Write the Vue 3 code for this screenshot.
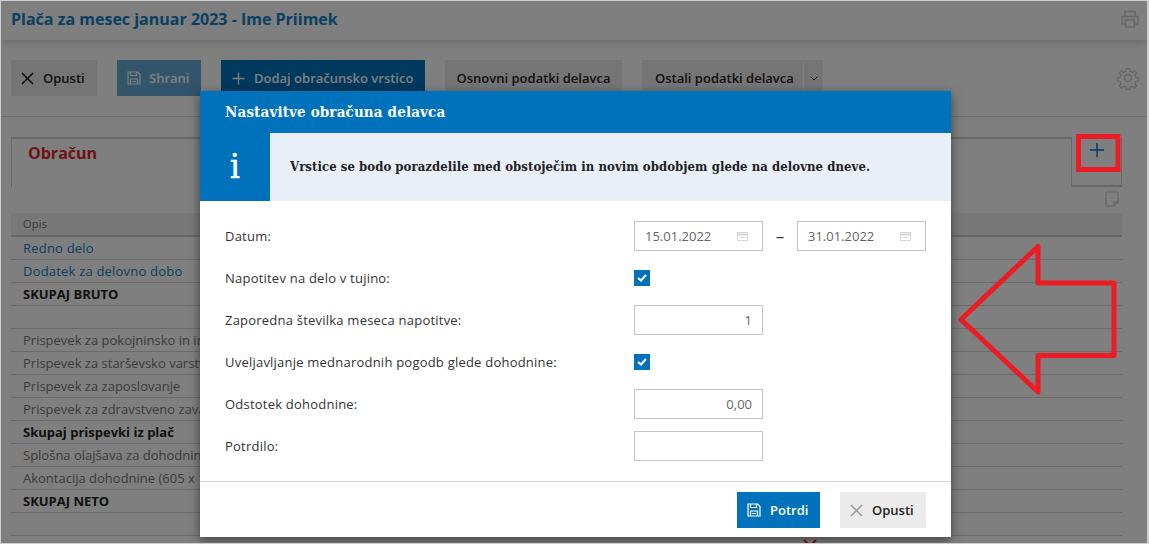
<script setup>
const rows = [
  { text: 'Redno delo', kind: 'link' },
  { text: 'Dodatek za delovno dobo', kind: 'link' },
  { text: 'SKUPAJ BRUTO', kind: 'bold' },
  { text: '\u00a0', kind: '' },
  { text: 'Prispevek za pokojninsko in invalidsko zavarovanje', kind: '' },
  { text: 'Prispevek za starševsko varstvo', kind: '' },
  { text: 'Prispevek za zaposlovanje', kind: '' },
  { text: 'Prispevek za zdravstveno zavarovanje', kind: '' },
  { text: 'Skupaj prispevki iz plač', kind: 'bold' },
  { text: 'Splošna olajšava za dohodnino', kind: '' },
  { text: 'Akontacija dohodnine (605 x 16%)', kind: '' },
  { text: 'SKUPAJ NETO', kind: 'bold' },
  { text: '\u00a0', kind: '' }
]
</script>

<template>
  <div class="stage">
    <header class="topbar">
      <h1 class="page-title">Plača za mesec januar 2023 - Ime Priimek</h1>
      <svg class="print-icon" width="20" height="20" viewBox="0 0 20 20" fill="none" stroke="currentColor" stroke-width="1.4">
        <path d="M5 7V2.5h10V7" />
        <path d="M5 15H2V7.5h16V15h-3" />
        <rect x="5.5" y="11" width="9" height="7" />
      </svg>
    </header>

    <div class="toolbar">
      <button class="btn btn-grey">
        <svg width="13" height="13" viewBox="0 0 13 13" fill="none" stroke="#111" stroke-width="1.5"><path d="M1 1l11 11M12 1L1 12" /></svg>
        <span>Opusti</span>
      </button>
      <button class="btn btn-blue btn-disabled">
        <svg width="14" height="14" viewBox="0 0 14 14" fill="none" stroke="currentColor" stroke-width="1.2"><path d="M1 1h9.5L13 3.5V13H1z" /><path d="M3.5 1v3.5h6V1M3.5 13V8h7v5M5 10.5h4" /></svg>
        <span>Shrani</span>
      </button>
      <button class="btn btn-blue btn-add">
        <svg width="13" height="13" viewBox="0 0 13 13" fill="none" stroke="currentColor" stroke-width="1.3"><path d="M6.5 0.5v12M0.5 6.5h12" /></svg>
        <span>Dodaj obračunsko vrstico</span>
      </button>
      <button class="btn btn-grey btn-plain btn-basic"><span>Osnovni podatki delavca</span></button>
      <div class="split">
        <button class="btn btn-grey btn-plain btn-other"><span>Ostali podatki delavca</span></button>
        <button class="btn btn-grey btn-caret">
          <svg width="8" height="5" viewBox="0 0 8 5" fill="none" stroke="#222" stroke-width="1"><path d="M0.5 0.5L4 4l3.5-3.5" /></svg>
        </button>
      </div>
      <svg class="gear-icon" width="24" height="24" viewBox="0 0 24 24" fill="none" stroke="currentColor" stroke-width="1.5">
        <circle cx="12" cy="12" r="3.6" />
        <path d="M10.3 1.5h3.4l.6 3 2.3 1 2.6-1.700 2.400 2.400-1.700 2.600 1 2.300 3 .6v3.400l-3 .6-1 2.300 1.700 2.600-2.400 2.400-2.600-1.700-2.300 1-.6 3h-3.400l-.6-3-2.300-1-2.600 1.700-2.400-2.400 1.700-2.600-1-2.300-3-.6v-3.400l3-.6 1-2.300-1.700-2.600 2.400-2.400 2.600 1.700 2.300-1z" transform="translate(1.200 1.200) scale(.9)" />
      </svg>
    </div>

    <main class="content">
      <div class="tabs">
        <div class="tab-main">Obračun</div>
        <div class="tab-add">
          <svg width="14" height="14" viewBox="0 0 14 14" fill="none" stroke="#0072bc" stroke-width="1.400"><path d="M7 0v14M0 7h14" /></svg>
        </div>
      </div>
      <div class="note-row">
        <svg width="14" height="16" viewBox="0 0 14 16" fill="none" stroke="currentColor" stroke-width="1.200"><path d="M1 1h12v10l-4 4H1z" /><path d="M13 11H9v4" /></svg>
      </div>
      <div class="table-head">Opis</div>
      <div v-for="(row, i) in rows" :key="i" class="table-row" :class="row.kind">{{ row.text }}</div>
      <div class="table-row link last-row">
        <span>Znesek za izplačilo na račun delavca</span>
        <svg class="row-x" width="14" height="14" viewBox="0 0 14 14" fill="none" stroke="#e8303a" stroke-width="2"><path d="M1 1l12 12M13 1L1 13" /></svg>
      </div>
    </main>

    <div class="scrim"></div>

    <svg class="annotation" width="1149" height="544" viewBox="0 0 1149 544" fill="none" stroke="#ed1c24">
      <rect x="1078.500" y="136.500" width="39.500" height="33" stroke-width="5" />
      <path d="M961 319.500L1038 246.500V283H1114V355.500H1038V392z" stroke-width="5" stroke-linejoin="round" />
    </svg>

    <section class="modal">
      <div class="modal-head">Nastavitve obračuna delavca</div>
      <div class="modal-info">
        <div class="info-icon">i</div>
        <p class="info-text">Vrstice se bodo porazdelile med obstoječim in novim obdobjem glede na delovne dneve.</p>
      </div>
      <div class="modal-body">
        <label class="field-label">Datum:</label>
        <div class="date-range">
          <div class="input input-date">
            <span>15.01.2022</span>
            <svg width="11" height="10" viewBox="0 0 11 10" fill="none" stroke="#d6d6d6" stroke-width="1"><rect x="0.500" y="1.500" width="10" height="8" /><path d="M0.500 3.500h10" stroke-width="2" /><path d="M3 6.500h5" /></svg>
          </div>
          <span class="dash">–</span>
          <div class="input input-date">
            <span>31.01.2022</span>
            <svg width="11" height="10" viewBox="0 0 11 10" fill="none" stroke="#d6d6d6" stroke-width="1"><rect x="0.500" y="1.500" width="10" height="8" /><path d="M0.500 3.500h10" stroke-width="2" /><path d="M3 6.500h5" /></svg>
          </div>
        </div>

        <label class="field-label">Napotitev na delo v tujino:</label>
        <div class="control">
          <span class="checkbox"><svg width="10" height="8" viewBox="0 0 10 8" fill="none" stroke="#fff" stroke-width="2"><path d="M1 4l3 2.500L9 1" /></svg></span>
        </div>

        <label class="field-label">Zaporedna številka meseca napotitve:</label>
        <div class="input input-num">1</div>

        <label class="field-label">Uveljavljanje mednarodnih pogodb glede dohodnine:</label>
        <div class="control">
          <span class="checkbox"><svg width="10" height="8" viewBox="0 0 10 8" fill="none" stroke="#fff" stroke-width="2"><path d="M1 4l3 2.500L9 1" /></svg></span>
        </div>

        <label class="field-label">Odstotek dohodnine:</label>
        <div class="input input-num">0,00</div>

        <label class="field-label">Potrdilo:</label>
        <div class="input input-num"></div>
      </div>
      <div class="modal-foot">
        <button class="btn btn-blue btn-confirm">
          <svg width="14" height="14" viewBox="0 0 14 14" fill="none" stroke="currentColor" stroke-width="1.200"><path d="M1 1h9.500L13 3.500V13H1z" /><path d="M3.500 1v3.500h6V1M3.500 13V8h7v5M5 10.500h4" /></svg>
          <span>Potrdi</span>
        </button>
        <button class="btn btn-grey">
          <svg width="13" height="13" viewBox="0 0 13 13" fill="none" stroke="#999" stroke-width="1.500"><path d="M1 1l11 11M12 1L1 12" /></svg>
          <span>Opusti</span>
        </button>
      </div>
    </section>
  </div>
</template>

<style>
html, body { margin: 0; background: #fff; }
</style>

<style scoped>
.stage {
  position: relative;
  box-sizing: border-box;
  width: 1149px;
  height: 544px;
  overflow: hidden;
  border: 1px solid #cfcfcf;
  border-right-width: 2px;
  background: #fff;
  font: 13px/18px "Open Sans", sans-serif;
  color: #222;
}

.topbar {
  position: relative;
  display: flex;
  align-items: center;
  justify-content: space-between;
  box-sizing: border-box;
  height: 39px;
  padding: 0 7px 4px 10px;
  box-shadow: 0 1px 9px rgba(0, 0, 0, .22);
}
.page-title {
  margin: 0;
  font-size: 16px;
  font-weight: 700;
  line-height: 22px;
  color: #1480c4;
}
.print-icon { color: #cfcfcf; }

.toolbar {
  position: relative;
  display: flex;
  align-items: center;
  gap: 20px;
  height: 76px;
  padding: 0 10px;
  border-bottom: 1px solid #d4d4d4;
  box-sizing: content-box;
}
.btn {
  display: inline-flex;
  align-items: center;
  gap: 9px;
  box-sizing: border-box;
  height: 36px;
  padding: 0 10px;
  border: 0;
  font: 600 13px/18px "Open Sans", sans-serif;
  white-space: nowrap;
}
.btn-grey { width: 86px; background: #ebebeb; color: #222; }
.btn-blue { background: #0072bc; color: #fff; }
.btn-disabled { width: 84px; gap: 8px; opacity: .6; }
.btn-add { width: 204px; padding-left: 11px; }
.btn-plain { justify-content: center; padding: 0; }
.btn-basic { width: 177px; }
.split { display: flex; gap: 1px; }
.btn-other { width: 161px; justify-content: flex-start; padding-left: 13px; }
.btn-caret { width: 19px; padding: 0; justify-content: center; }
.gear-icon { margin-left: auto; margin-right: -3px; color: #cfcfcf; }

.content { padding: 20px 25px 0 10px; }
.tabs { display: flex; height: 50px; }
.tab-main {
  flex: 1;
  box-sizing: border-box;
  padding: 3px 0 0 16px;
  border-top: 2px solid #d0d0d0;
  border-left: 1px solid #d0d0d0;
  font-size: 16px;
  font-weight: 700;
  line-height: 22px;
  color: #d8262e;
}
.tab-add {
  display: flex;
  justify-content: center;
  box-sizing: border-box;
  width: 51px;
  padding-top: 6px;
  border: 1px solid #d0d0d0;
  border-top: 0;
  border-bottom-width: 2px;
}
.note-row {
  display: flex;
  justify-content: flex-end;
  box-sizing: border-box;
  height: 26px;
  padding: 4px 3px 0 0;
  color: #c8c8c8;
}
.table-head {
  box-sizing: border-box;
  height: 24px;
  padding: 1px 0 0 12px;
  background: #f0f0f0;
  border-bottom: 2px solid #cfcfcf;
  font-size: 11px;
  line-height: 19px;
  letter-spacing: .2px;
  color: #777;
}
.table-row {
  box-sizing: border-box;
  height: 23px;
  padding-left: 12px;
  border-bottom: 1px solid #d4d4d4;
  line-height: 22px;
  color: #777;
}
.table-row.link { letter-spacing: .2px; color: #1480c4; }
.table-row.bold { font-weight: 700; color: #222; }
.last-row {
  display: flex;
  justify-content: space-between;
  padding-right: 305px;
  border-bottom: 0;
  line-height: 24px;
}
.row-x { margin-top: 3px; }

.scrim {
  position: absolute;
  inset: 0;
  background: rgba(0, 0, 0, .5);
}
.annotation {
  position: absolute;
  left: -1px;
  top: -1px;
}

.modal {
  position: absolute;
  left: 199px;
  top: 90px;
  width: 751px;
  height: 446px;
  background: #fff;
  box-shadow: 0 3px 10px rgba(0, 0, 0, .5);
}
.modal-head {
  box-sizing: border-box;
  height: 42px;
  padding-left: 25px;
  background: #0072bc;
  font-family: "DejaVu Serif", serif;
  font-stretch: condensed;
  font-size: 15px;
  font-weight: 700;
  line-height: 42px;
  letter-spacing: .15px;
  color: #fff;
}
.modal-info { display: flex; height: 68px; background: #e8eff9; }
.info-icon {
  width: 70px;
  background: #0072bc;
  font-family: "DejaVu Serif", serif;
  font-stretch: condensed;
  font-size: 34px;
  font-weight: 400;
  line-height: 66px;
  text-align: center;
  -webkit-text-stroke: .6px #fff;
  color: #fff;
}
.info-text {
  margin: 0;
  padding-left: 20px;
  font-family: "DejaVu Serif", serif;
  font-stretch: condensed;
  font-size: 13px;
  font-weight: 700;
  line-height: 68px;
  letter-spacing: .06px;
  color: #222;
  white-space: nowrap;
}
.modal-body {
  display: grid;
  grid-template-columns: 409px 292px;
  grid-auto-rows: 30px;
  row-gap: 12px;
  align-items: center;
  box-sizing: border-box;
  height: 281px;
  padding: 20px 25px;
  border-bottom: 1px solid #d4d4d4;
}
.field-label { letter-spacing: .22px; color: #333; }
.date-range { display: flex; align-items: center; }
.dash { width: 34px; font-size: 17px; text-align: center; color: #333; }
.input {
  box-sizing: border-box;
  width: 129px;
  height: 30px;
  border: 1px solid #c4c4c4;
  line-height: 28px;
  color: #666;
}
.input-date {
  display: flex;
  align-items: center;
  justify-content: space-between;
  padding: 0 14px 0 10px;
}
.input-num { padding-right: 10px; text-align: right; }
.control { display: flex; align-items: center; }
.checkbox {
  display: flex;
  align-items: center;
  justify-content: center;
  width: 16px;
  height: 16px;
  background: #0072bc;
}
.modal-foot {
  display: flex;
  justify-content: flex-end;
  gap: 20px;
  padding: 10px 25px 0 0;
}
.btn-confirm { width: 83px; }
</style>
